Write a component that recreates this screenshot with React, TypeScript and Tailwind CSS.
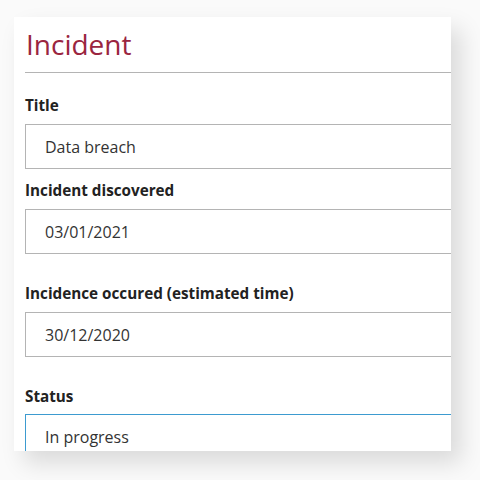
const fields = [
  { label: 'Title', value: 'Data breach', mt: 'mt-[22px]' },
  { label: 'Incident discovered', value: '03/01/2021', mt: 'mt-[11px]' },
  { label: 'Incidence occured (estimated time)', value: '30/12/2020', mt: 'mt-[29px]' },
]

export default function App() {
  return (
    <div className="h-[480px] w-[480px] overflow-hidden bg-[#fafafa] pt-[17px] pl-[14px]" style={{ fontFamily: '"Open Sans", sans-serif' }}>
      <div className="h-[434px] w-[437px] overflow-hidden bg-white pl-[11px] shadow-[10px_12px_22px_rgba(0,0,0,0.13)]">
        <h1 className="w-[480px] pt-[13px] pl-px text-[28px] leading-[28px] text-[#9a2540]">Incident</h1>
        <div className="mt-[14px] h-px w-[480px] bg-[#b4b4b4]" />
        {fields.map((f) => (
          <div key={f.label} className={f.mt}>
            <label className="block text-[15.25px] leading-[20px] font-bold text-[#222]">{f.label}</label>
            <div className="mt-[9px] flex h-[45px] w-[480px] items-center border border-[#b4b4b4] pl-[19px] text-[16px] text-[#333]">
              {f.value}
            </div>
          </div>
        ))}
        <div className="mt-[29px]">
          <label className="block text-[15.25px] leading-[20px] font-bold text-[#222]">Status</label>
          <div className="mt-[8px] flex h-[45px] w-[480px] items-center border border-[#3d9bd0] pl-[19px] text-[16px] text-[#333]">
            In progress
          </div>
        </div>
      </div>
    </div>
  )
}
